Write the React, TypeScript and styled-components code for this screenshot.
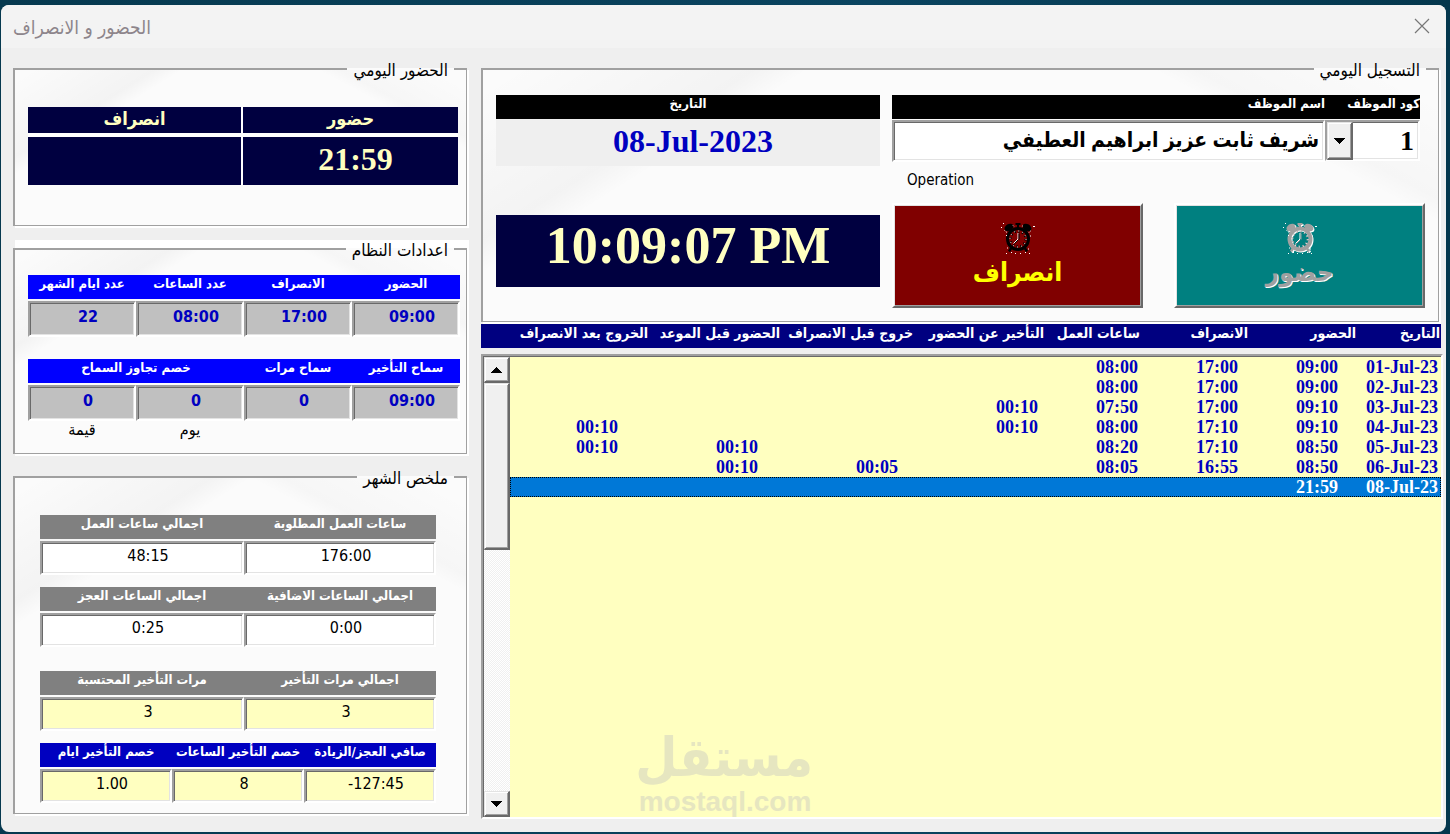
import React from "react";
import styled, { createGlobalStyle, css } from "styled-components";

const ui = `"DejaVu Sans Condensed", "DejaVu Sans", sans-serif`;
const serif = `"Liberation Serif", "DejaVu Sans Condensed", "DejaVu Sans", serif`;

const GlobalStyle = createGlobalStyle`
  *, *::before, *::after { box-sizing: border-box; }
  body { margin: 0; background: #0b3f58; font-family: ${ui}; font-size: 16px; color: #000; }
  button, input, select { font: inherit; margin: 0; }
  table { border-collapse: separate; border-spacing: 0; }
`;

const Desktop = styled.div`
  display: flex;
  min-height: 100vh;
  padding: 5px 4px 2px 1px;
  background: linear-gradient(90deg, #06394f, #0a4460 60%, #04374d);
`;

const Window = styled.main`
  flex: 1;
  display: flex;
  flex-direction: column;
  min-width: 0;
  background: #efefef;
  border-radius: 8px;
  overflow: hidden;
`;

const TitleBar = styled.header`
  display: flex;
  align-items: center;
  justify-content: space-between;
  height: 43px;
  padding: 0 16px 0 12px;
  background: #f3f3f3;
`;

const Title = styled.h1`
  margin: 0;
  font-size: 19px;
  font-weight: 400;
  line-height: 24px;
  color: #8d858b;
`;

const CloseButton = styled.button`
  display: flex;
  padding: 0 0 2px;
  border: 0;
  background: none;
`;

const Body = styled.div`
  flex: 1;
  display: flex;
  gap: 14px;
  padding: 9px 3px 13px 12px;
`;

const SideColumn = styled.div`
  flex: 0 0 454px;
  display: flex;
  flex-direction: column;
  gap: 11px;
`;

const MainColumn = styled.div`
  flex: 1;
  min-width: 0;
  display: flex;
  flex-direction: column;
`;

const Frame = styled.fieldset<{ $lifted?: boolean; $inset?: number }>`
  min-width: 0;
  margin: 0 ${(p) => p.$inset ?? 0}px 0 0;
  padding: 0;
  border: solid #a0a0a0;
  border-width: 2px 1px 1px 2px;
  box-shadow: 2px 2px 0 #fff${(p) => (p.$lifted ? ", 2px -8px 0 #fff" : "")};
  background:
    linear-gradient(28deg, transparent 80%, rgba(0, 0, 0, 0.02) 83%, transparent 96%),
    linear-gradient(-32deg, transparent 76%, rgba(0, 0, 0, 0.03) 80%, transparent 98%),
    #fbfbfb;
`;

const FrameBody = styled.div<{ $pad: string }>`
  padding: ${(p) => p.$pad};
`;

const Legend = styled.legend`
  margin: 0 12px;
  padding: 3px 6px 0;
  font-size: 17px;
  line-height: 21px;
`;

const Columns = styled.div<{ $cols: string }>`
  display: grid;
  grid-template-columns: ${(p) => p.$cols};
`;

const HeadBand = styled(Columns)<{ $color: string; $gap?: number }>`
  height: 24px;
  margin-bottom: ${(p) => p.$gap ?? 2}px;
  background: ${(p) => p.$color};
`;

const HeadLabel = styled.label<{ $start?: boolean; $span?: number }>`
  grid-column: span ${(p) => p.$span ?? 1};
  color: #fff;
  font-size: 13px;
  font-weight: 700;
  line-height: 18px;
  text-align: ${(p) => (p.$start ? "start" : "center")};
  white-space: nowrap;
`;

const sunken = css`
  border: solid;
  border-width: 2px;
  border-color: #a0a0a0 #fff #fff #a0a0a0;
  border-radius: 0;
  box-shadow: inset 1px 1px 0 #696969, inset -1px -1px 0 #e3e3e3;
  outline: 0;
`;

const Field = styled.input<{ $tone: "grey" | "white" | "cream" }>`
  ${sunken}
  width: 100%;
  min-width: 0;
  height: ${(p) => (p.$tone === "grey" ? 36 : 34)}px;
  padding: 0 0 6px 12px;
  direction: ltr;
  text-align: center;
  font-size: 16px;
  background: ${(p) => ({ grey: "#c0c0c0", white: "#fff", cream: "#ffffc0" })[p.$tone]};
  color: ${(p) => (p.$tone === "grey" ? "#0000c0" : "#000")};
  font-weight: ${(p) => (p.$tone === "grey" ? 700 : 400)};
`;

const Caption = styled.span`
  line-height: 18px;
  height: 20px;
  text-align: center;
`;

const Stack = styled.div<{ $gap: number }>`
  display: flex;
  flex-direction: column;
  gap: ${(p) => p.$gap}px;
`;

const DayTable = styled.table`
  width: 100%;
  table-layout: fixed;
  color: #ffffc0;
  font-family: ${serif};

  th, td { padding: 0; background: #000040; text-align: center; vertical-align: top; }
  th { height: 30px; border-bottom: 4px solid #fff; font-size: 18px; line-height: 24px; }
  td { height: 48px; padding-left: 10px; font-size: 32px; font-weight: 700; line-height: 44px; }
  th + th, td + td { border-right: 2px solid #fff; }
`;

const Register = styled.div`
  display: grid;
  grid-template-columns: 533fr 384fr;
  column-gap: 12px;
`;

const Employee = styled.div`
  display: flex;
  flex-direction: column;
`;

const EmployeeBlock = styled.div`
  margin-inline-start: 5px;
`;

const NameField = styled.input`
  ${sunken}
  min-width: 0;
  height: 42px;
  padding: 0 4px 2px;
  background: #fff;
  font-family: ${serif};
  font-size: 21px;
  font-weight: 700;
`;

const CodeBox = styled.div`
  position: relative;
  height: 42px;
`;

const CodeSelect = styled.select`
  ${sunken}
  appearance: none;
  width: 100%;
  height: 41px;
  padding: 0 4px 0 30px;
  background: #fff;
  font-family: ${serif};
  font-size: 28px;
  font-weight: 700;
  color: #000;
`;

const raised = css`
  display: flex;
  align-items: center;
  justify-content: center;
  padding: 0;
  background: #f0f0f0;
  border: solid;
  border-width: 1px 2px 2px 1px;
  border-color: #e3e3e3 #696969 #696969 #e3e3e3;
  box-shadow: inset 1px 1px 0 #fff, inset -1px -1px 0 #a0a0a0;
`;

const DropArrow = styled.span`
  ${raised}
  position: absolute;
  top: 2px;
  left: 2px;
  width: 26px;
  height: 38px;
  pointer-events: none;
`;

const Operation = styled.p`
  margin: 8px 0 13px;
  padding: 0 15px;
  direction: ltr;
  font-size: 15px;
  line-height: 20px;
`;

const PunchRow = styled.div`
  display: grid;
  grid-template-columns: 1fr 1fr;
  column-gap: 31px;
`;

const PunchButton = styled.button<{ $color: string; $ink: string }>`
  display: flex;
  flex-direction: column;
  align-items: center;
  justify-content: center;
  height: 105px;
  padding: 0;
  border: solid;
  border-width: 2px;
  border-color: #fff #696969 #696969 #fff;
  box-shadow: inset 1px 1px 0 #e3e3e3, inset -1px -1px 0 #a0a0a0;
  background: ${(p) => p.$color};
  color: ${(p) => p.$ink};
  font-family: ${serif};
  font-size: 26px;
  font-weight: 700;
  line-height: 34px;

  &:disabled { text-shadow: 1px 1px 0 #fff; }
`;

const BlackBand = styled.div`
  height: 24px;
  background: #000;
  color: #fff;
  font-size: 13px;
  font-weight: 700;
  line-height: 18px;
  text-align: center;
`;

const Today = styled.div`
  height: 47px;
  margin-bottom: 49px;
  padding-left: 10px;
  background: #efefef;
  color: #0000c0;
  direction: ltr;
  font-family: ${serif};
  font-size: 32px;
  font-weight: 700;
  line-height: 44px;
  text-align: center;
`;

const Clock = styled.time`
  display: block;
  height: 72px;
  background: #000040;
  color: #ffffc0;
  direction: ltr;
  font-family: ${serif};
  font-size: 52px;
  font-weight: 700;
  line-height: 62px;
  text-align: center;
`;

const LogHead = styled.div`
  display: flex;
  height: 24px;
  margin: 2px 2px 6px 0;
  padding-right: 1px;
  background: #000080;
  color: #fff;
  font-size: 14px;
  font-weight: 700;
  line-height: 18px;
  white-space: nowrap;
`;

const LogHeadCell = styled.span<{ $w: number }>`
  flex: 0 0 ${(p) => p.$w}px;
`;

const LogBox = styled.div`
  flex: 1;
  position: relative;
  display: flex;
  border: solid;
  border-width: 2px;
  border-color: #a0a0a0 #fff #fff #a0a0a0;
  box-shadow: inset 1px 1px 0 #696969;
  padding: 1px 0 0 1px;
  background: #ffffc0;
`;

const LogTable = styled.table`
  flex: 1;
  align-self: flex-start;
  table-layout: fixed;
  font-family: ${serif};
  font-size: 18px;
  font-weight: 700;
  color: #0000c0;
`;

const LogRow = styled.tr<{ $selected?: boolean }>`
  height: 20px;
  ${(p) =>
    p.$selected &&
    css`
      background: #0078d7;
      color: #fff;
      outline: 1px dotted #000;
      outline-offset: -1px;
    `}
`;

const LogCell = styled.td`
  padding: 0 3px 0 0;
  line-height: 20px;
  text-align: right;
  white-space: nowrap;
`;

const ScrollBar = styled.div`
  flex: 0 0 26px;
  display: flex;
  flex-direction: column;
  background: repeating-conic-gradient(#fff 0 25%, #f0f0f0 0 50%) 0 0 / 2px 2px;
`;

const ScrollButton = styled.button`
  ${raised}
  height: 26px;
`;

const ScrollThumb = styled.div`
  ${raised}
  height: 167px;
  margin-bottom: auto;
`;

const Watermark = styled.div`
  position: absolute;
  left: 154px;
  bottom: 0;
  width: 176px;
  color: #e6e6c0;
  font-weight: 700;
  text-align: center;
  white-space: nowrap;
  pointer-events: none;
`;

const MarkName = styled.div`
  font-family: ${ui};
  font-size: 54px;
  line-height: 58px;
`;

const MarkSite = styled.div`
  direction: ltr;
  font-family: "Liberation Sans", sans-serif;
  font-size: 28px;
  line-height: 30px;
`;

function Triangle({ up }: { up?: boolean }) {
  return (
    <svg width="11" height="6" viewBox="0 0 11 6" shapeRendering="crispEdges" aria-hidden="true">
      <path d={up ? "M0 6 5.5 0 11 6z" : "M0 0 5.5 6 11 0z"} />
    </svg>
  );
}

function ClockShape({ ink, ring }: { ink: string; ring: number }) {
  return (
    <g fill="none" stroke={ink}>
      <ellipse cx="8" cy="5.5" rx="4.8" ry="3.4" transform="rotate(-32 8 5.5)" fill={ink} stroke="none" />
      <ellipse cx="26" cy="5.5" rx="4.8" ry="3.4" transform="rotate(32 26 5.5)" fill={ink} stroke="none" />
      <path d="M14.5 2h5M17 2v4" strokeWidth="2" />
      <circle cx="17" cy="17" r="10.5" strokeWidth={ring} />
      <path d="M10.5 25.5 8 29.5M23.5 25.5 26 29.5" strokeWidth="2.4" />
    </g>
  );
}

function AlarmIcon({ faded }: { faded?: boolean }) {
  const ink = faded ? "#a0a0a0" : "#000";
  const ring = faded ? 4 : 3;
  return (
    <svg width="34" height="34" viewBox="0 0 34 34" aria-hidden="true">
      {faded && (
        <g transform="translate(1 1)">
          <ClockShape ink="#fff" ring={ring} />
        </g>
      )}
      <ClockShape ink={ink} ring={ring} />
      <circle cx="17" cy="17" r="7.5" fill="none" stroke={ink} strokeWidth="2" strokeDasharray="1.5 2.427" />
      <g fill="none" stroke="#fff" strokeWidth="1">
        <circle cx="17" cy="17" r="8" strokeDasharray="1 3.19" />
        <path d="M17 11v6l-4.5 4.5" />
        <path d="M3.5 8.5 6 10.5M28 10.5l2-2M12 3.5l1.5 1.5M22 3.5 20.5 5" strokeDasharray="1 1" />
        <path d="M2 1.5h1M0 5.5h1M32 4.5h2M6 26h1M5 31.5h1M10 30.5h1M14 31.5h1M19 31.5h1M24 30.5h1M27 27h1M28 31.5h1M5 13.5h1M29 14h1" />
      </g>
      <path d="M18 11.5v6M17 18l-3.5 3.500" stroke={ink} strokeWidth="1" fill="none" />
    </svg>
  );
}

type Item = { label: string; value: string };

function FieldRow({
  id, items, cols, band, tone,
}: { id: string; items: Item[]; cols: string; band: string; tone: "grey" | "white" | "cream" }) {
  return (
    <div>
      <HeadBand $cols={cols} $color={band}>
        {items.map((it, i) => (
          <HeadLabel key={it.label} htmlFor={`${id}-${i}`}>{it.label}</HeadLabel>
        ))}
      </HeadBand>
      <Columns $cols={cols}>
        {items.map((it, i) => (
          <Field key={it.label} id={`${id}-${i}`} $tone={tone} value={it.value} readOnly />
        ))}
      </Columns>
    </div>
  );
}

const logHeads: [string, number][] = [
  ["التاريخ", 84],
  ["الحضور", 108],
  ["الانصراف", 108],
  ["ساعات العمل", 96],
  ["التأخير عن الحضور", 131],
  ["خروج قبل الانصراف", 133],
  ["الحضور قبل الموعد", 132],
  ["الخروج بعد الانصراف", 140],
];

const log = [
  ["01-Jul-23", "09:00", "17:00", "08:00", "", "", "", ""],
  ["02-Jul-23", "09:00", "17:00", "08:00", "", "", "", ""],
  ["03-Jul-23", "09:10", "17:00", "07:50", "00:10", "", "", ""],
  ["04-Jul-23", "09:10", "17:10", "08:00", "00:10", "", "", "00:10"],
  ["05-Jul-23", "08:50", "17:10", "08:20", "", "", "00:10", "00:10"],
  ["06-Jul-23", "08:50", "16:55", "08:05", "", "00:05", "00:10", ""],
  ["08-Jul-23", "21:59", "", "", "", "", "", ""],
];

const quarter = "repeat(4, 1fr)";

export default function App() {
  return (
    <Desktop>
      <GlobalStyle />
      <Window>
        <TitleBar>
          <Title dir="rtl">الحضور و الانصراف</Title>
          <CloseButton aria-label="إغلاق">
            <svg width="16" height="16" viewBox="0 0 16 16" fill="none" stroke="#777" strokeWidth="1.2">
              <path d="M1 1l14 14M15 1 1 15" />
            </svg>
          </CloseButton>
        </TitleBar>
        <Body>
          <SideColumn dir="rtl">
            <Frame>
              <Legend>الحضور اليومي</Legend>
              <FrameBody $pad="26px 8px 40px 13px">
                <DayTable>
                  <thead>
                    <tr><th>حضور</th><th>انصراف</th></tr>
                  </thead>
                  <tbody>
                    <tr><td>21:59</td><td /></tr>
                  </tbody>
                </DayTable>
              </FrameBody>
            </Frame>

            <Frame $lifted>
              <Legend>اعدادات النظام</Legend>
              <FrameBody $pad="14px 6px 12px 13px">
                <Stack $gap={22}>
                  <FieldRow
                    id="shift" cols={quarter} band="#0000ff" tone="grey"
                    items={[
                      { label: "الحضور", value: "09:00" },
                      { label: "الانصراف", value: "17:00" },
                      { label: "عدد الساعات", value: "08:00" },
                      { label: "عدد ايام الشهر", value: "22" },
                    ]}
                  />
                  <div>
                    <HeadBand $cols={quarter} $color="#0000ff">
                      <HeadLabel htmlFor="grace-0">سماح التأخير</HeadLabel>
                      <HeadLabel htmlFor="grace-1">سماح مرات</HeadLabel>
                      <HeadLabel htmlFor="grace-2" $span={2}>خصم تجاوز السماح</HeadLabel>
                    </HeadBand>
                    <Columns $cols={quarter}>
                      <Field id="grace-0" $tone="grey" value="09:00" readOnly />
                      <Field id="grace-1" $tone="grey" value="0" readOnly />
                      <Field id="grace-2" $tone="grey" value="0" readOnly />
                      <Field aria-label="قيمة" $tone="grey" value="0" readOnly />
                      <span />
                      <span />
                      <Caption>يوم</Caption>
                      <Caption>قيمة</Caption>
                    </Columns>
                  </div>
                </Stack>
              </FrameBody>
            </Frame>

            <Frame>
              <Legend>ملخص الشهر</Legend>
              <FrameBody $pad="26px 30px 10px 25px">
                <Stack $gap={12}>
                  <FieldRow
                    id="hours" cols="192fr 204fr" band="#808080" tone="white"
                    items={[
                      { label: "ساعات العمل المطلوبة", value: "176:00" },
                      { label: "اجمالي ساعات العمل", value: "48:15" },
                    ]}
                  />
                  <Stack $gap={24}>
                    <FieldRow
                      id="extra" cols="192fr 204fr" band="#808080" tone="white"
                      items={[
                        { label: "اجمالي الساعات الاضافية", value: "0:00" },
                        { label: "اجمالي الساعات العجز", value: "0:25" },
                      ]}
                    />
                    <FieldRow
                      id="late" cols="192fr 204fr" band="#808080" tone="cream"
                      items={[
                        { label: "اجمالي مرات التأخير", value: "3" },
                        { label: "مرات التأخير المحتسبة", value: "3" },
                      ]}
                    />
                  </Stack>
                  <FieldRow
                    id="net" cols="repeat(3, 1fr)" band="#0000c0" tone="cream"
                    items={[
                      { label: "صافي العجز/الزيادة", value: "-127:45" },
                      { label: "خصم التأخير الساعات", value: "8" },
                      { label: "خصم التأخير ايام", value: "1.00" },
                    ]}
                  />
                </Stack>
              </FrameBody>
            </Frame>
          </SideColumn>

          <MainColumn dir="rtl">
            <Frame $inset={4}>
              <Legend>التسجيل اليومي</Legend>
              <FrameBody $pad="14px 13px 13px 13px">
                <Register>
                  <Employee>
                    <EmployeeBlock>
                      <HeadBand $cols="95px 1fr" $color="#000" $gap={1}>
                        <HeadLabel htmlFor="code" $start>كود الموظف</HeadLabel>
                        <HeadLabel htmlFor="name" $start>اسم الموظف</HeadLabel>
                      </HeadBand>
                      <Columns $cols="95px 1fr">
                        <CodeBox>
                          <CodeSelect id="code" defaultValue="1"><option>1</option></CodeSelect>
                          <DropArrow><Triangle /></DropArrow>
                        </CodeBox>
                        <NameField id="name" value="شريف ثابت عزيز ابراهيم العطيفي" readOnly />
                      </Columns>
                    </EmployeeBlock>
                    <Operation>Operation</Operation>
                    <PunchRow>
                      <PunchButton $color="#008080" $ink="#a0a0a0" disabled>
                        <AlarmIcon faded />
                        حضور
                      </PunchButton>
                      <PunchButton $color="#800000" $ink="#ffff00">
                        <AlarmIcon />
                        انصراف
                      </PunchButton>
                    </PunchRow>
                  </Employee>
                  <div>
                    <BlackBand>التاريخ</BlackBand>
                    <Today>08-Jul-2023</Today>
                    <Clock>10:09:07 PM</Clock>
                  </div>
                </Register>
              </FrameBody>
            </Frame>

            <LogHead>
              {logHeads.map(([text, w]) => (
                <LogHeadCell key={text} $w={w}>{text}</LogHeadCell>
              ))}
            </LogHead>
            <LogBox>
              <LogTable aria-label="سجل الحضور">
                <colgroup>
                  {[100, 100, 100, 100, 140, 140, 140].map((w, i) => (
                    <col key={i} width={w} />
                  ))}
                  <col />
                </colgroup>
                <tbody>
                  {log.map((row, i) => (
                    <LogRow key={row[0]} $selected={i === 6}>
                      {row.map((cell, j) => (
                        <LogCell key={j} dir="ltr">{cell}</LogCell>
                      ))}
                    </LogRow>
                  ))}
                </tbody>
              </LogTable>
              <ScrollBar>
                <ScrollButton aria-label="أعلى"><Triangle up /></ScrollButton>
                <ScrollThumb />
                <ScrollButton aria-label="أسفل"><Triangle /></ScrollButton>
              </ScrollBar>
              <Watermark>
                <MarkName>مستقل</MarkName>
                <MarkSite>mostaql.com</MarkSite>
              </Watermark>
            </LogBox>
          </MainColumn>
        </Body>
      </Window>
    </Desktop>
  );
}
